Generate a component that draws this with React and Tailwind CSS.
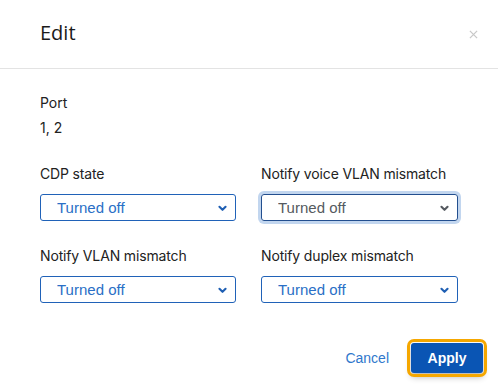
import React from 'react';

function Chevron({ className }) {
  return (
    <svg viewBox="0 0 12 8" className={className} fill="none" stroke="currentColor" strokeWidth="2.4" strokeLinecap="round" strokeLinejoin="round">
      <path d="M2.5 2l3.5 3.5 3.5-3.5" />
    </svg>
  );
}

function SelectField({ label, focused }) {
  return (
    <div className="flex flex-col">
      <label className="text-[14px] leading-[20px] text-[#222] font-['Inter',sans-serif] tracking-[-0.15px]">{label}</label>
      <div
        className={
          'relative mt-[10px] h-[27px] rounded-[3px] border ' +
          (focused ? 'border-[#234f8f] ring-[3px] ring-[#c2d6ef]' : 'border-[#2062b8]')
        }
      >
        <select
          defaultValue="off"
          className={
            "h-full w-full appearance-none bg-transparent pl-[16px] pr-8 text-[15px] outline-none font-['Liberation_Sans',Arial,sans-serif] " +
            (focused ? 'text-[#555a60]' : 'text-[#2a6fc6]')
          }
        >
          <option value="off">Turned off</option>
          <option value="on">Turned on</option>
        </select>
        <Chevron
          className={
            'pointer-events-none absolute right-[7px] top-[10px] h-[7px] w-[11px] ' +
            (focused ? 'text-[#555a60]' : 'text-[#1f5fb3]')
          }
        />
      </div>
    </div>
  );
}

export default function App() {
  return (
    <div className="h-[386px] w-[498px] bg-white">
      <div className="flex h-[69px] items-center justify-between border-b border-[#e3e3e3] pl-[40px] pr-[20px]">
        <h2 className="text-[20px] text-[#1a1a1a] font-['Open_Sans',sans-serif] pb-[2px]">Edit</h2>
        <button className="text-[#c8c8c8]" aria-label="Close">
          <svg viewBox="0 0 10 10" className="h-[9px] w-[9px]" stroke="currentColor" strokeWidth="1.4">
            <path d="M1 1l8 8M9 1l-8 8" />
          </svg>
        </button>
      </div>

      <div className="px-[40px] pt-[24px]">
        <div className="font-['Inter',sans-serif] text-[14px] text-[#222]">
          <div className="leading-[20px]">Port</div>
          <div className="mt-[5px] leading-[20px]">1, 2</div>
        </div>

        <div className="mt-[26px] grid grid-cols-[196px_197px] gap-x-[25px] gap-y-[25px]">
          <SelectField label="CDP state" />
          <SelectField label="Notify voice VLAN mismatch" focused />
          <SelectField label="Notify VLAN mismatch" />
          <SelectField label="Notify duplex mismatch" />
        </div>
      </div>

      <div className="mt-[40px] flex items-center justify-end gap-[22px] pr-[15px]">
        <button className="text-[14px] text-[#2f78cc] font-['Liberation_Sans',Arial,sans-serif]">Cancel</button>
        <button className="h-[30px] w-[72px] rounded-[3px] bg-[#0a55b4] text-[14px] font-bold text-white font-['Liberation_Sans',Arial,sans-serif] outline outline-[3px] outline-offset-[1px] outline-[#f5a700] shadow-[0_4px_6px_rgba(0,0,0,0.3)]">
          Apply
        </button>
      </div>
    </div>
  );
}
